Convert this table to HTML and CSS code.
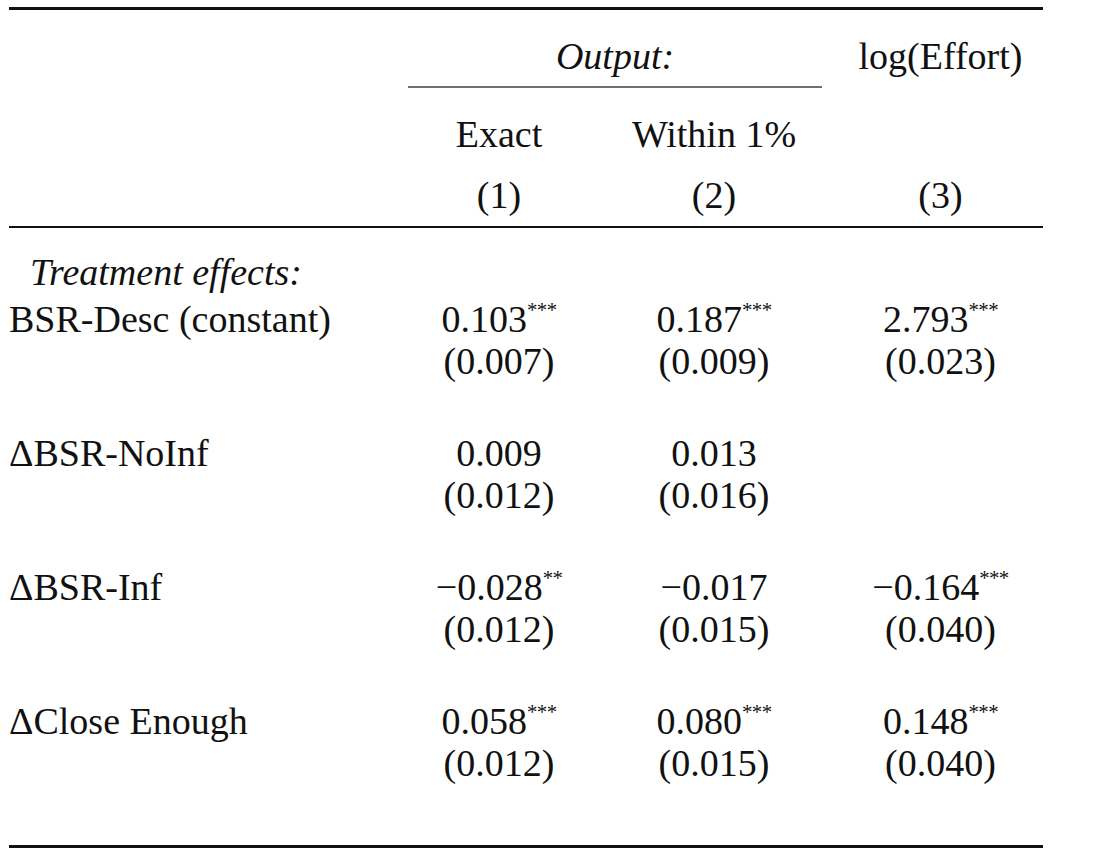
FILE: index.html
```html
<!DOCTYPE html>
<html lang="en">
<head>
<meta charset="utf-8">
<title>Regression table</title>
<link rel="stylesheet" href="styles.css">
</head>
<body>
<div class="table">
  <div class="rule rule-top"></div>

  <div class="row head1">
    <div class="cell label"></div>
    <div class="cell span2 it">Output:</div>
    <div class="cell">log(Effort)</div>
  </div>
  <div class="row cmid-row">
    <div></div>
    <div class="cmid"></div>
    <div></div>
  </div>
  <div class="row head2">
    <div class="cell label"></div>
    <div class="cell">Exact</div>
    <div class="cell">Within 1%</div>
    <div class="cell"></div>
  </div>
  <div class="row head3">
    <div class="cell label"></div>
    <div class="cell">(1)</div>
    <div class="cell">(2)</div>
    <div class="cell">(3)</div>
  </div>

  <div class="rule rule-mid"></div>

  <div class="row section">
    <div class="cell label it indent">Treatment effects:</div>
  </div>

  <div class="block">
    <div class="row coef">
      <div class="cell label">BSR-Desc (constant)</div>
      <div class="cell">0.103<sup>***</sup></div>
      <div class="cell">0.187<sup>***</sup></div>
      <div class="cell">2.793<sup>***</sup></div>
    </div>
    <div class="row se">
      <div class="cell label"></div>
      <div class="cell">(0.007)</div>
      <div class="cell">(0.009)</div>
      <div class="cell">(0.023)</div>
    </div>
  </div>

  <div class="block">
    <div class="row coef">
      <div class="cell label">&Delta;BSR-NoInf</div>
      <div class="cell">0.009</div>
      <div class="cell">0.013</div>
      <div class="cell"></div>
    </div>
    <div class="row se">
      <div class="cell label"></div>
      <div class="cell">(0.012)</div>
      <div class="cell">(0.016)</div>
      <div class="cell"></div>
    </div>
  </div>

  <div class="block">
    <div class="row coef">
      <div class="cell label">&Delta;BSR-Inf</div>
      <div class="cell">&minus;0.028<sup>**</sup></div>
      <div class="cell">&minus;0.017</div>
      <div class="cell">&minus;0.164<sup>***</sup></div>
    </div>
    <div class="row se">
      <div class="cell label"></div>
      <div class="cell">(0.012)</div>
      <div class="cell">(0.015)</div>
      <div class="cell">(0.040)</div>
    </div>
  </div>

  <div class="block last">
    <div class="row coef">
      <div class="cell label">&Delta;Close Enough</div>
      <div class="cell">0.058<sup>***</sup></div>
      <div class="cell">0.080<sup>***</sup></div>
      <div class="cell">0.148<sup>***</sup></div>
    </div>
    <div class="row se">
      <div class="cell label"></div>
      <div class="cell">(0.012)</div>
      <div class="cell">(0.015)</div>
      <div class="cell">(0.040)</div>
    </div>
  </div>

  <div class="rule rule-bottom"></div>
</div>
</body>
</html>
```
FILE: styles.css
```css
html, body {
  margin: 0;
  padding: 0;
  background: #ffffff;
}

body {
  font-family: "Liberation Serif", "Times New Roman", serif;
  font-size: 38px;
  color: #111111;
}

.table {
  width: 1034px;
  margin-left: 9px;
  padding-top: 7px;
}

.rule {
  background: #111111;
}

.rule-top {
  height: 3px;
}

.rule-mid {
  height: 2px;
  margin-top: 9px;
}

.rule-bottom {
  height: 3px;
  margin-top: 61px;
}

.row {
  display: grid;
  grid-template-columns: 399px 182px 248px 205px;
  line-height: 44px;
}

.cell {
  text-align: center;
  white-space: nowrap;
}

.cell.label {
  text-align: left;
}

.span2 {
  grid-column: span 2;
  padding-right: 16px;
}

.it {
  font-style: italic;
}

.indent {
  padding-left: 21px;
}

.head1 {
  padding-top: 24px;
}

.cmid-row {
  line-height: normal;
  padding-top: 8px;
}

.cmid {
  grid-column: span 2;
  height: 2px;
  margin-right: 16px;
  background: #6f6f6f;
}

.head2 {
  padding-top: 24px;
}

.head3 {
  padding-top: 17px;
}

.section {
  padding-top: 22px;
}

.block {
  padding-top: 4px;
}

.block + .block {
  padding-top: 50px;
}

.coef,
.se {
  line-height: 42px;
}

sup {
  font-size: 0.55em;
  line-height: 0;
  vertical-align: 0.7em;
  letter-spacing: -0.03em;
}
```
